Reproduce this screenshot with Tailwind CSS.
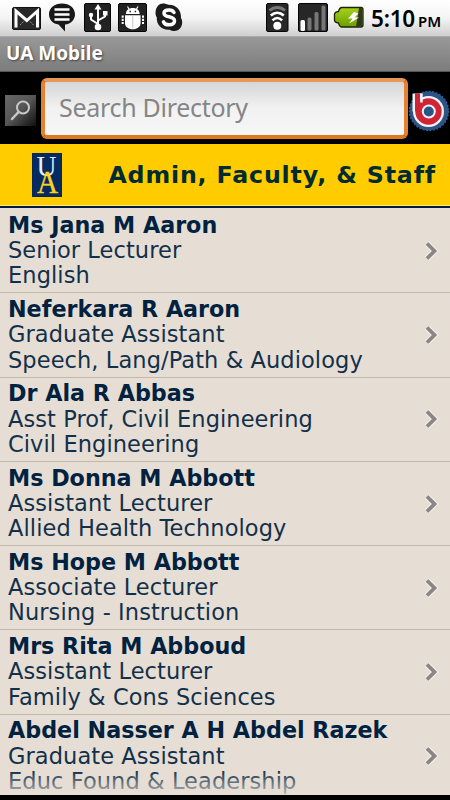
<!DOCTYPE html>
<html lang="en">

<head>
  <meta charset="UTF-8">
  <meta name="viewport" content="width=device-width, initial-scale=1.0">
  <title>UA Mobile</title>
  <script src="https://cdn.jsdelivr.net/npm/@tailwindcss/browser@4"></script>
</head>

<body class="w-[450px] h-[800px] overflow-hidden bg-black flex flex-col font-['Noto_Sans',sans-serif]">
  <!-- Status bar -->
  <header class="h-9 shrink-0 flex items-start bg-linear-to-b from-white via-[#f4f4f4] to-[#cfcfcf] pt-[3px] pl-3 pr-[9px]">
    <svg class="w-[30px] h-[30px]" viewBox="0 0 30 30">
      <rect x=".5" y="4.500" width="28" height="22" rx="1.500" fill="#292929" stroke="#111" />
      <path d="M4 24.500V8L14.800 17.500 25.500 8V24.500" fill="none" stroke="#fff" stroke-width="3" />
      <path d="M8 22l4-4M21.500 22l-4-4" stroke="#999" stroke-width="1" stroke-dasharray="2 1" />
    </svg>
    <svg class="w-7 h-[30px] ml-[6px]" viewBox="0 0 28 30">
      <path d="M14 .5C6.500.5 1 5 1 11.200c0 5.500 4 9.500 9.500 10.300L17 28.500V21.600c6-.8 10-5 10-10.400C27 5 21.500.5 14 .5z" fill="#181818" />
      <path d="M6.500 6.500h15M6.500 11.500h15M6.500 16.500h15" stroke="#fff" stroke-width="2.600" />
    </svg>
    <svg class="w-7 h-[30px] ml-2" viewBox="0 0 28 30">
      <rect x=".5" y=".5" width="26" height="28" rx="1.500" fill="#222" stroke="#050505" />
      <path d="M14 24V5M14 21l-7-4.500V12M14 17.500l7-4V10" fill="none" stroke="#fff" stroke-width="2" />
      <path d="M14 1l3.500 5.500h-7z" fill="#fff" />
      <circle cx="14" cy="24" r="3.300" fill="#fff" />
      <circle cx="7" cy="12" r="2.200" fill="#fff" />
      <path d="M19 8h4.500v4.500H19z" fill="#fff" />
    </svg>
    <svg class="w-[30px] h-[30px] ml-[6px]" viewBox="0 0 30 30">
      <rect x=".5" y=".5" width="28" height="28" rx="1.500" fill="#222" stroke="#050505" />
      <path d="M8 11c0-4 2.800-6 6.800-6s6.800 2 6.800 6zM7 12.200h15.600v8c0 3.500-3.500 6-7.800 6s-7.800-2.500-7.800-6z" fill="#fff" />
      <path d="M11 6L9.500 3.500M18.500 6L20 3.500" fill="none" stroke="#fff" stroke-width="1.200" />
      <path d="M4.700 12.500v9.500M25 12.500v9.500" fill="none" stroke="#fff" stroke-width="2" stroke-dasharray="2.200 1" />
      <path d="M14.800 13v12" stroke="#bbb" stroke-width=".8" />
      <path d="M11.500 8.500h1.400M16.700 8.500h1.400" stroke="#222" stroke-width="1.300" />
    </svg>
    <svg class="w-7 h-[30px] ml-[7px]" viewBox="0 0 28 30">
      <path d="M8 .5c2.400 0 3.600.6 5.200 1.300C21 1.300 26.500 7 26 15c1.200 2 1.500 4 1 6.300-.8 4-3.800 6.700-7.500 6.700-2 0-3.500-.5-5-1.300C7 27.300 1.300 22 1.800 14.500.6 12.600.3 10.500.6 8.500 1.200 4 4 .5 8 .5z" fill="#1c1c1c" />
      <path d="M19 9.500C18 7.600 16.500 7 14 7c-3 0-5 1.200-5 3.300 0 5 10.500 2 10.500 7.500 0 2.500-2.200 4-5.500 4-3 0-4.800-1-5.500-3" fill="none" stroke="#fff" stroke-width="3.500" stroke-linecap="round" />
    </svg>

    <svg class="w-[23px] h-[30px] ml-auto" viewBox="0 0 23 30">
      <rect x=".5" y=".5" width="21.500" height="28" rx="1.500" fill="#272727" stroke="#050505" />
      <path d="M3.500 7.500c4.500-4 11-4 15.500 0" fill="none" stroke="#777" stroke-width="2.800" />
      <path d="M4.800 12.500c4-3.600 9-3.600 13 0" fill="none" stroke="#fff" stroke-width="2.700" />
      <path d="M6.500 17.300c3-2.800 6.600-2.800 9.600 0" fill="none" stroke="#fff" stroke-width="2.500" />
      <circle cx="11.300" cy="22.700" r="4" fill="#fff" />
    </svg>
    <svg class="w-[30px] h-[30px] ml-[9px]" viewBox="0 0 30 30">
      <rect x=".5" y=".5" width="29" height="28" rx="1.500" fill="#272727" stroke="#050505" />
      <rect x="2.500" y="17" width="4.500" height="11" rx="1.500" fill="#fff" />
      <rect x="9.500" y="14.500" width="4" height="13" rx="1.500" fill="#777" />
      <rect x="16.500" y="9" width="4" height="18.500" rx="1.500" fill="#777" />
      <rect x="23.500" y="2.500" width="4" height="25" rx="1.500" fill="#777" />
    </svg>
    <svg class="w-[31px] h-[30px] ml-[5px]" viewBox="0 0 31 30">
      <defs>
        <linearGradient id="battery" x2="0" y2="1">
          <stop stop-color="#a6d51b" />
          <stop offset="1" stop-color="#6c9d00" />
        </linearGradient>
      </defs>
      <path d="M9 4.500h19q2 0 2 2v15.500q0 2-2 2H9q-2.500 0-3.500-4-4-.5-4-3v-5.500q0-2.500 4-3 1-4 3.500-4z" fill="url(#battery)" stroke="#1c2600" stroke-width="1.300" />
      <path d="M26 5h2q1.500 0 1.500 1.500V22q0 1.500-1.500 1.500h-5z" fill="#33361f" />
      <path d="M21 9l-6 6.500h4.500l-3.500 5 10-6h-4.500l4-4z" fill="#fff" />
    </svg>
    <div class="flex items-baseline ml-[7px] text-black font-semibold whitespace-nowrap">
      <span class="w-[47px] text-[22.500px] leading-8 tracking-[-0.2px]">5:10</span>
      <span class="w-[23px] text-[15px]">PM</span>
    </div>
  </header>

  <!-- Title bar -->
  <div class="h-9 shrink-0 bg-linear-to-b from-[#999] to-[#7c7c7c] border-t border-[#aaa] border-b border-b-[#555] px-[6px] text-white text-[19px] leading-[33px] font-bold [text-shadow:1px_1px_2px_#444]">UA Mobile</div>

  <!-- Search -->
  <div class="h-[72px] shrink-0 flex items-center bg-black">
    <div class="w-[31px] h-[31px] ml-[5px] mt-[5px] bg-linear-to-br from-[#686868] via-[#555] to-[#111]">
      <svg class="w-full h-full" viewBox="0 0 31 31" fill="none" stroke="#c8c8c8" stroke-linecap="round">
        <circle cx="18" cy="12.500" r="6" stroke-width="2" />
        <path d="M13.500 17L7 24" stroke-width="2.500" />
      </svg>
    </div>
    <div class="w-[367px] h-[61px] ml-[5px] mt-[1px] rounded-[6px] border-4 border-t-[#e8975a] border-x-[#e38332] border-b-[#dc7a20] bg-linear-to-b from-[#d6d6d6] via-[#f2f2f2] to-[#f6f6f6] pl-[14px] text-[#858585] text-[25px] tracking-[-0.3px] leading-[50px] whitespace-nowrap">Search Directory</div>
    <svg class="w-[42px] h-[42px] mt-[5px]" viewBox="0 0 42 42">
      <circle cx="21" cy="21" r="19.500" fill="#2c5386" stroke="#31598b" stroke-width="1.500" stroke-dasharray="2 1.500" />
      <!-- white outline, then the red letter -->
      <path d="M9 3.500V21.500" stroke="#f2f2f5" stroke-width="9" />
      <circle cx="20.500" cy="21.500" r="15.500" fill="#f2f2f5" />
      <path d="M9.500 3.500V21.500" stroke="#d02434" stroke-width="5" />
      <circle cx="20.500" cy="21.500" r="13.200" fill="#d02434" />
      <path d="M13.500 3.500V12.500" stroke="#f2f2f5" stroke-width="2.500" />
      <circle cx="20.800" cy="21.500" r="7" fill="#f2f2f5" />
      <circle cx="20.800" cy="21.500" r="5" fill="#2c5386" />
    </svg>
  </div>

  <!-- Section heading -->
  <div class="h-16 shrink-0 flex bg-[#ffcc00] border-b-2 border-[#00193f] shadow-[inset_0_-1px_#ffe884]">
    <svg class="w-[30px] h-11 ml-8 mt-[9px]" viewBox="0 0 30 44">
      <rect width="30" height="44" fill="#052b63" stroke="#10234a" />
      <g font-family="Liberation Serif, serif">
        <text x="4.500" y="23" font-size="29" textLength="20" lengthAdjust="spacingAndGlyphs" fill="#e9eef5">U</text>
        <text x="5" y="40" font-size="32" textLength="21" lengthAdjust="spacingAndGlyphs" fill="#ffd21c" stroke="#ffd21c" stroke-width=".4">A</text>
      </g>
    </svg>
    <h1 class="ml-auto mr-[14px] text-[#002b33] text-[23.700px] tracking-[0.85px] leading-[62px] font-bold font-['DejaVu_Sans',sans-serif] whitespace-nowrap">Admin, Faculty, &amp; Staff</h1>
  </div>

  <!-- Directory list, rows are filled in below -->
  <main class="relative h-[587px] shrink-0 overflow-hidden bg-[#e6ded4] pt-px font-['DejaVu_Sans',sans-serif] text-[#002240]">
    <ul id="directory"></ul>
    <div class="absolute inset-x-0 bottom-0 h-6 bg-linear-to-b from-[#e6ded4]/0 to-[#e6ded4]/80"></div>
  </main>

  <script>
    const people = [
      ['Ms Jana M Aaron', 'Senior Lecturer', 'English'],
      ['Neferkara R Aaron', 'Graduate Assistant', 'Speech, Lang/Path &amp; Audiology'],
      ['Dr Ala R Abbas', 'Asst Prof, Civil Engineering', 'Civil Engineering'],
      ['Ms Donna M Abbott', 'Assistant Lecturer', 'Allied Health Technology'],
      ['Ms Hope M Abbott', 'Associate Lecturer', 'Nursing - Instruction'],
      ['Mrs Rita M Abboud', 'Assistant Lecturer', 'Family &amp; Cons Sciences'],
      ['Abdel Nasser A H Abdel Razek', 'Graduate Assistant', 'Educ Found &amp; Leadership'],
    ];

    document.getElementById('directory').innerHTML = people.map(([name, title, dept]) => `
      <li class="h-[84.300px] flex items-center justify-between border-b border-[#c4b8a8] pl-2 pr-[10px] text-[22.500px] leading-[25.300px] whitespace-nowrap">
        <div>
          <div class="font-bold text-[22.250px]">${name}</div>
          <div class="text-[#12304a] tracking-[0.08px]">${title}</div>
          <div class="text-[#12304a] tracking-[0.08px]">${dept}</div>
        </div>
        <svg class="w-4 h-6 shrink-0" viewBox="0 0 16 24" fill="none">
          <path d="M3 4.500l7.500 7.500L3 19.500" stroke="#f4efe9" stroke-width="6" />
          <path d="M3 4.500l7.500 7.500L3 19.500" stroke="#8b8685" stroke-width="3.800" />
        </svg>
      </li>
    `).join('');
  </script>
</body>
</html>
